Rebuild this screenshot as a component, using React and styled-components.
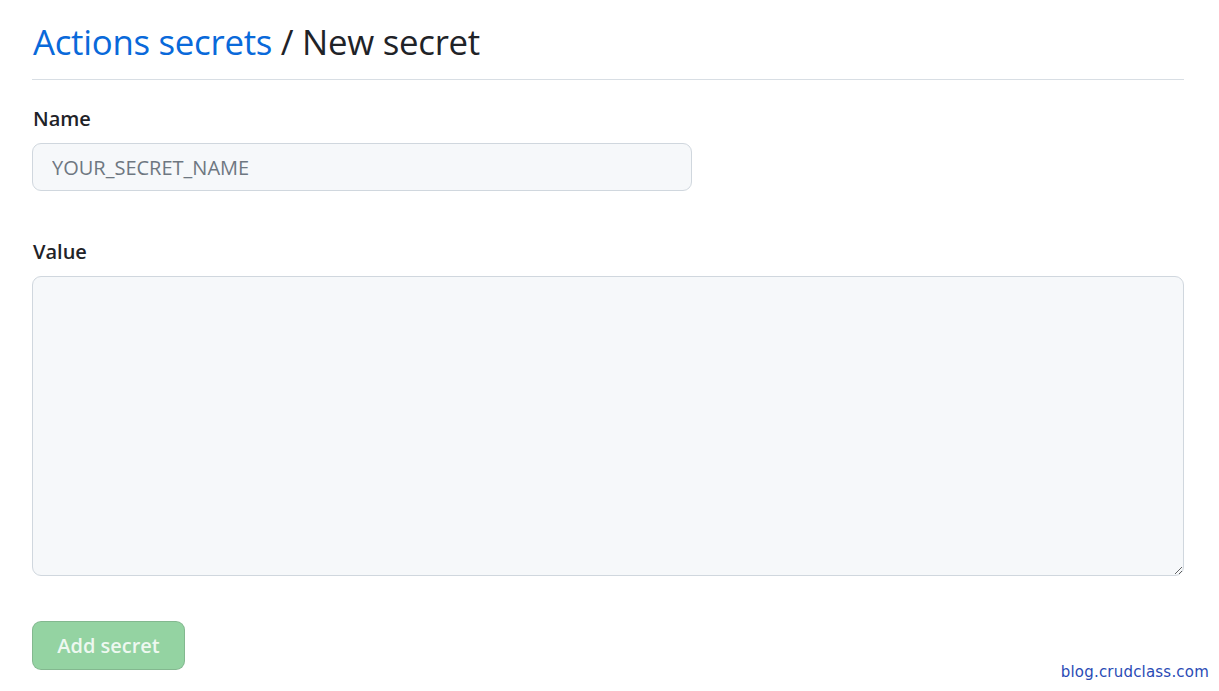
import React from "react";
import styled, { createGlobalStyle } from "styled-components";

const Global = createGlobalStyle`
  html, body { margin: 0; padding: 0; background: #ffffff; }
  body { font-family: "Open Sans", "Noto Sans", sans-serif; color: #1f2328; }
`;

const Page = styled.div`
  width: 1219px;
  height: 691px;
  box-sizing: border-box;
  padding: 18px 35px 0 32px;
  position: relative;
  overflow: hidden;
`;

const Header = styled.div`
  border-bottom: 1px solid #d8dee4;
  padding-bottom: 13px;
  margin-bottom: 24px;
`;

const Title = styled.h2`
  margin: 0;
  padding-left: 1px;
  font-size: 34.8px;
  font-weight: 400;
  line-height: 48px;
  letter-spacing: -0.28px;
`;

const Crumb = styled.a`
  color: #0969da;
  text-decoration: none;
`;

const Field = styled.div`
  display: flex;
  flex-direction: column;
  margin-bottom: ${(p) => p.$gap || 0}px;
`;

const Label = styled.label`
  font-size: 20px;
  font-weight: 600;
  line-height: 30px;
  margin-bottom: 9px;
  padding-left: 1px;
`;

const Input = styled.input`
  box-sizing: border-box;
  width: 660px;
  height: 48px;
  padding: 0 19px;
  font-family: inherit;
  font-size: 20px;
  color: #1f2328;
  background: #f6f8fa;
  border: 1px solid #d0d7de;
  border-radius: 9px;
  outline: none;
  &::placeholder { color: #6e7781; }
`;

const TextArea = styled.textarea`
  box-sizing: border-box;
  width: 1152px;
  height: 300px;
  padding: 12px 18px;
  font-family: inherit;
  font-size: 20px;
  background: #f6f8fa;
  border: 1px solid #d0d7de;
  border-radius: 9px;
  outline: none;
  resize: vertical;
`;

const Button = styled.button`
  box-sizing: border-box;
  width: 153px;
  height: 49px;
  font-family: inherit;
  font-size: 20px;
  font-weight: 600;
  color: rgba(255, 255, 255, 0.85);
  background: #94d3a2;
  border: 1px solid rgba(31, 35, 40, 0.15);
  border-radius: 9px;
  cursor: not-allowed;
`;

const Watermark = styled.div`
  position: absolute;
  right: 10px;
  bottom: 10px;
  font-family: "DejaVu Sans", sans-serif;
  font-size: 15px;
  color: #2a4bb5;
  letter-spacing: 0.2px;
`;

export default function App() {
  return (
    <>
      <Global />
      <Page>
        <Header>
          <Title>
            <Crumb href="#">Actions secrets</Crumb> / New secret
          </Title>
        </Header>
        <Field $gap={46}>
          <Label>Name</Label>
          <Input placeholder="YOUR_SECRET_NAME" />
        </Field>
        <Field $gap={45}>
          <Label>Value</Label>
          <TextArea />
        </Field>
        <Button disabled>Add secret</Button>
        <Watermark>blog.crudclass.com</Watermark>
      </Page>
    </>
  );
}
